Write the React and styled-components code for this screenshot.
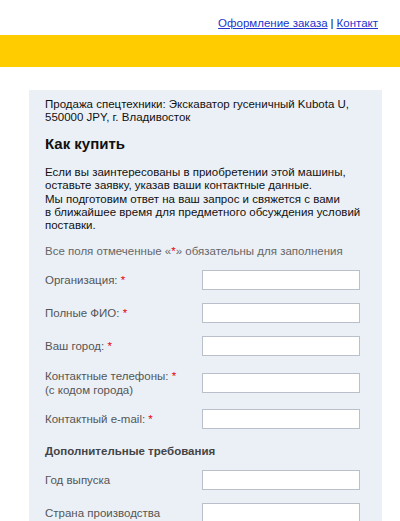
import React from 'react'
import styled, { createGlobalStyle } from 'styled-components'

const GlobalStyle = createGlobalStyle`
  html, body {
    margin: 0;
    padding: 0;
    background: #fff;
    font-family: "Liberation Sans", Arial, sans-serif;
  }
`

const TopBar = styled.div`
  height: 35px;
  display: flex;
  justify-content: flex-end;
  align-items: flex-start;
  padding: 16px 22px 0 0;
  box-sizing: border-box;
  font-size: 11.5px;
  line-height: 14px;
  color: #000;
`

const TopLink = styled.a`
  color: #2233cc;
  text-decoration: underline;
  cursor: pointer;
`

const Sep = styled.span`
  margin: 0 3px;
`

const Stripe = styled.div`
  height: 32px;
  background: #ffcc00;
`

const Panel = styled.div`
  margin: 23px 0 0 29px;
  width: 353px;
  box-sizing: border-box;
  background: #ebf0f7;
  padding: 8px 8px 0 16px;
  min-height: 440px;
`

const Intro = styled.p`
  margin: 0;
  font-size: 11.5px;
  line-height: 13px;
  color: #111;
`

const Heading = styled.h2`
  margin: 10px 0 0;
  font-size: 15px;
  line-height: 20px;
  font-weight: bold;
  color: #111;
`

const Text = styled.p`
  margin: 12px 0 0;
  font-size: 11.5px;
  line-height: 13.3px;
  color: #111;
`

const Note = styled.p`
  margin: 12px 0 0;
  font-size: 11.5px;
  line-height: 14px;
  color: #666;
`

const Star = styled.span`
  color: #e8000b;
`

const Form = styled.div`
  margin-top: 12px;
  display: flex;
  flex-direction: column;
`

const Row = styled.div`
  display: grid;
  grid-template-columns: 157px 158px;
  align-items: center;
  margin-bottom: ${p => p.$gap || 13}px;
`

const Label = styled.label`
  font-size: 11.5px;
  line-height: 14px;
  color: #555;
`

const Input = styled.input`
  width: 158px;
  height: 20px;
  box-sizing: border-box;
  border: 1px solid #b9c0c9;
  background: #fff;
  margin: 0;
  padding: 0 3px;
`

const Section = styled.div`
  margin: 1px 0 12px;
  font-size: 11.5px;
  line-height: 14px;
  font-weight: bold;
  color: #444;
`

const Field = ({ label, sub, required, gap }) => (
  <Row $gap={gap}>
    <Label>
      {label}
      {required && <> <Star>*</Star></>}
      {sub && <><br />{sub}</>}
    </Label>
    <Input type="text" />
  </Row>
)

const App = () => (
  <>
    <GlobalStyle />
    <TopBar>
      <TopLink>Оформление заказа</TopLink>
      <Sep>|</Sep>
      <TopLink>Контакт</TopLink>
    </TopBar>
    <Stripe />
    <Panel>
      <Intro>
        Продажа спецтехники: Экскаватор гусеничный Kubota U,<br />
        550000 JPY, г. Владивосток
      </Intro>
      <Heading>Как купить</Heading>
      <Text>
        Если вы заинтересованы в приобретении этой машины,<br />
        оставьте заявку, указав ваши контактные данные.<br />
        Мы подготовим ответ на ваш запрос и свяжется с вами<br />
        в ближайшее время для предметного обсуждения условий<br />
        поставки.
      </Text>
      <Note>Все поля отмеченные «<Star>*</Star>» обязательны для заполнения</Note>
      <Form>
        <Field label="Организация:" required />
        <Field label="Полные ФИО:" required />
        <Field label="Ваш город:" required />
        <Field label="Контактные телефоны:" sub="(с кодом города)" required gap={12} />
        <Field label="Контактный e-mail:" required gap={14} />
        <Section>Дополнительные требования</Section>
        <Field label="Год выпуска" />
        <Field label="Страна производства" />
      </Form>
    </Panel>
  </>
)

export default App
